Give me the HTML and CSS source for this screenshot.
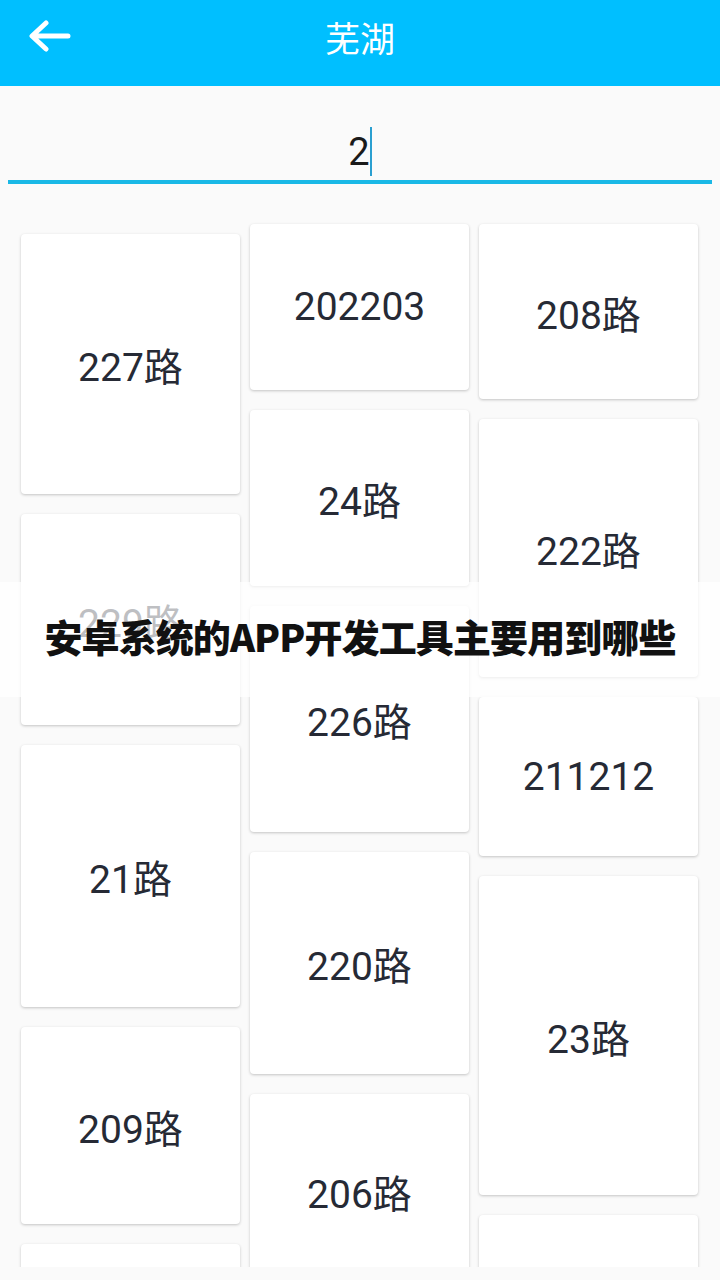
FILE: index.html
```html
<!DOCTYPE html>
<html lang="zh">
<head>
<meta charset="utf-8">
<title>芜湖</title>
<link rel="stylesheet" href="styles.css">
</head>
<body>
<div class="page">
  <header class="appbar">
    <svg class="back" width="44" height="36" viewBox="0 0 44 36">
      <path d="M40 16 H5 M18 3 L4 16 L18 29" fill="none" stroke="#fff" stroke-width="5" stroke-linecap="round" stroke-linejoin="round"/>
    </svg>
    <div class="title">芜湖</div>
  </header>
  <main class="content">
    <div class="search">
      <div class="field"><span class="value">2</span><span class="caret"></span></div>
    </div>
    <div class="grid">
      <div class="col col1">
        <div class="card h260">227路</div>
        <div class="card h211">229路</div>
        <div class="card h262">21路</div>
        <div class="card h197">209路</div>
        <div class="card h200"></div>
      </div>
      <div class="col">
        <div class="card h166">202203</div>
        <div class="card h176">24路</div>
        <div class="card h226">226路</div>
        <div class="card h222">220路</div>
        <div class="card h194">206路</div>
      </div>
      <div class="col">
        <div class="card h175">208路</div>
        <div class="card h258">222路</div>
        <div class="card h159">211212</div>
        <div class="card h319">23路</div>
        <div class="card h140">2</div>
      </div>
    </div>
  </main>
  <div class="banner">安卓系统的APP开发工具主要用到哪些</div>
</div>
</body>
</html>
```

FILE: styles.css
```css
html, body {
  margin: 0;
  padding: 0;
  background: #fafafa;
}
.page {
  position: relative;
  width: 720px;
  height: 1280px;
  overflow: hidden;
  font-family: Roboto, "Noto Sans CJK SC", sans-serif;
}
.appbar {
  height: 86px;
  background: #00bfff;
  display: flex;
  align-items: center;
  justify-content: center;
  position: relative;
}
.back {
  position: absolute;
  left: 28px;
  top: 20px;
}
.title {
  color: #fff;
  font-family: "Noto Sans CJK SC", sans-serif;
  font-size: 35px;
  line-height: 1;
  margin-top: -14px;
}
.content {
  height: 1181px;
  overflow: hidden;
}
.search {
  padding: 0 8px 0 8px;
}
.field {
  height: 98px;
  border-bottom: 4px solid #1ab8e6;
  display: flex;
  align-items: flex-end;
  justify-content: center;
  box-sizing: border-box;
  padding-bottom: 4px;
}
.value {
  font-size: 38px;
  line-height: 48px;
  color: #1a1a1a;
}
.caret {
  width: 2px;
  height: 49px;
  background: #2a9fd0;
}
.grid {
  display: grid;
  grid-template-columns: 219px 219px 219px;
  column-gap: 10px;
  padding: 40px 22px 0 21px;
  align-items: start;
}
.col {
  display: flex;
  flex-direction: column;
  gap: 20px;
}
.col1 {
  padding-top: 10px;
}
.card {
  background: #fff;
  border-radius: 4px;
  box-shadow: 0 1px 3px rgba(0,0,0,0.22);
  display: flex;
  align-items: center;
  justify-content: center;
  font-size: 39px;
  color: #262a35;
}
.h260 { height: 260px; }
.h211 { height: 211px; }
.h262 { height: 262px; }
.h197 { height: 197px; }
.h200 { height: 200px; }
.h166 { height: 166px; }
.h176 { height: 176px; }
.h226 { height: 226px; }
.h222 { height: 222px; }
.h194 { height: 194px; }
.h175 { height: 175px; }
.h258 { height: 258px; }
.h159 { height: 159px; }
.h319 { height: 319px; }
.h140 { height: 140px; }
.banner {
  position: absolute;
  left: 0;
  top: 582px;
  width: 720px;
  height: 115px;
  background: rgba(255,255,255,0.7);
  display: flex;
  align-items: center;
  justify-content: center;
  font-family: "Noto Sans CJK SC", sans-serif;
  font-weight: 900;
  font-size: 38px;
  color: #111;
  letter-spacing: -0.9px;
  padding-bottom: 8px;
  box-sizing: border-box;
}
```
